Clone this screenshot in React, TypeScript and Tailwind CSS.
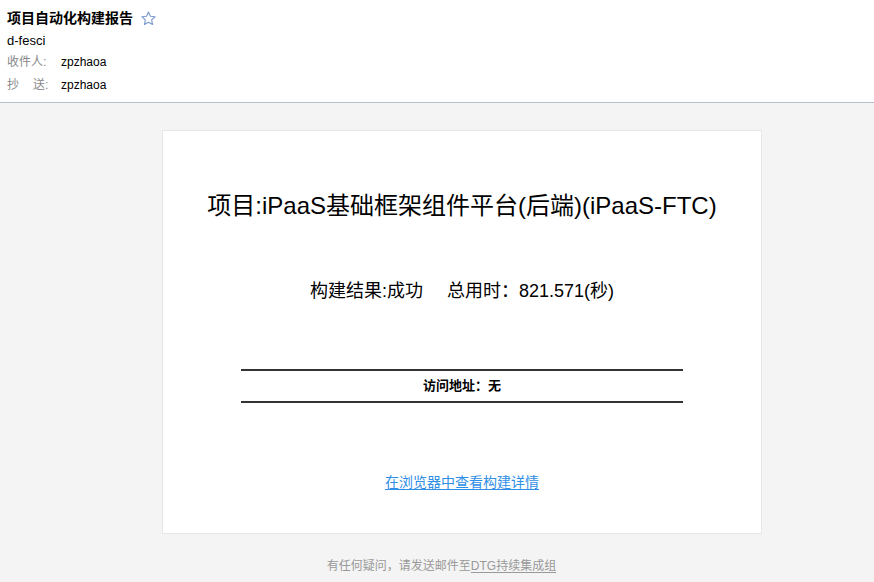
import React from "react";

const font = { fontFamily: '"Liberation Sans", "Noto Sans CJK SC", sans-serif' };

export default function App() {
  return (
    <div className="w-[874px] h-[582px] bg-[#f4f4f4] overflow-hidden text-black" style={font}>
      <div className="bg-white border-b border-[#b3bfcc] h-[103px] pl-[7px] pt-[7px]">
        <div className="flex items-center h-[23px]">
          <span className="text-[14px] font-bold leading-[21px]">项目自动化构建报告</span>
          <svg className="ml-[7px]" width="17" height="17" viewBox="0 0 24 24" fill="none" stroke="#7d9bd0" strokeWidth="1.6" strokeLinejoin="round">
            <path d="M12 2.8l2.75 6.05 6.6.7-4.95 4.45 1.4 6.5L12 17.2l-5.8 3.3 1.4-6.5-4.95-4.45 6.6-.7z" />
          </svg>
        </div>
        <div className="text-[13px] leading-[21px] h-[21px]">d-fesci</div>
        <div className="flex text-[12px] leading-[23px] h-[23px]">
          <span className="w-[54px] text-[#888]">收件人:</span>
          <span>zpzhaoa</span>
        </div>
        <div className="flex text-[12px] leading-[23px] h-[23px]">
          <span className="w-[54px] text-[#888]">抄<span className="ml-[14px]">送:</span></span>
          <span>zpzhaoa</span>
        </div>
      </div>
      <div className="mt-[27px] ml-[162px] w-[600px] h-[404px] border border-[#e6e6e6] bg-white flex flex-col items-center">
        <div className="mt-[59px] text-[24px] leading-[32px]">项目:iPaaS基础框架组件平台(后端)(iPaaS-FTC)</div>
        <div className="mt-[56px] text-[18px] leading-[26px]">构建结果:成功<span className="ml-[24px]">总用时：821.571(秒)</span></div>
        <div className="mt-[65px] w-[442px] border-t-2 border-b-2 border-[#333] h-[34px] text-center text-[13px] font-bold leading-[30px]">访问地址：无</div>
        <a href="#" className="mt-[69px] text-[14px] leading-[20px] text-[#2f8ee5] underline underline-offset-2">在浏览器中查看构建详情</a>
      </div>
      <div className="mt-[22px] text-center pl-[9px] text-[12px] leading-[20px] text-[#999]">
        有任何疑问，请发送邮件至<span className="underline underline-offset-2">DTG持续集成组</span>
      </div>
    </div>
  );
}
